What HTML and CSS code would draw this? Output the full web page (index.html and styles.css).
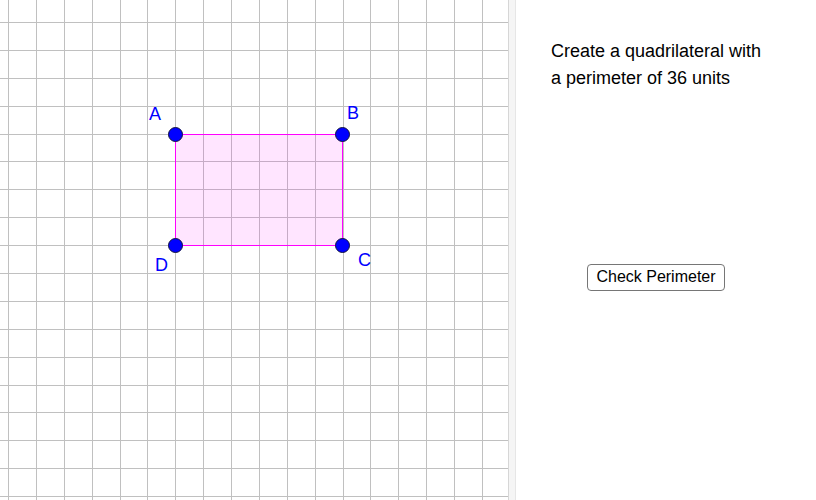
FILE: index.html
```html
<!DOCTYPE html>
<html lang="en">
<head>
    <meta charset="UTF-8">
    <title>Quadrilateral Perimeter</title>
    <link rel="stylesheet" href="styles.css">
</head>
<body>
    <div class="applet">
        <div class="graphics">
            <svg class="board" width="508" height="500" viewBox="0 0 508 500">
                <!-- grid, ~27.88px per unit -->
                <path class="grid" d="M8.5 0V500M36.5 0V500M64.5 0V500M92.5 0V500M120.5 0V500M147.5 0V500M175.5 0V500M203.5 0V500M231.5 0V500M259.5 0V500M287.5 0V500M315.5 0V500M343.5 0V500M370.5 0V500M398.5 0V500M426.5 0V500M454.5 0V500M482.5 0V500
                    M0 22.5H508M0 50.5H508M0 78.5H508M0 106.5H508M0 134.5H508M0 161.5H508M0 189.5H508M0 217.5H508M0 245.5H508M0 273.5H508M0 301.5H508M0 329.5H508M0 357.5H508M0 385.5H508M0 412.5H508M0 440.5H508M0 468.5H508M0 496.5H508"/>

                <polygon class="quad" points="175.5,134.5 342.5,134.5 342.5,245.5 175.5,245.5"/>

                <circle class="point" cx="175.5" cy="134.5" r="7"/>
                <circle class="point" cx="342.5" cy="134.5" r="7"/>
                <circle class="point" cx="342.5" cy="245.5" r="7"/>
                <circle class="point" cx="175.5" cy="245.5" r="7"/>

                <text class="label" x="149" y="120">A</text>
                <text class="label" x="347" y="119">B</text>
                <text class="label" x="358" y="266">C</text>
                <text class="label" x="155" y="271">D</text>
            </svg>
        </div>
        <div class="divider"></div>
        <div class="side">
            <p class="task">Create a quadrilateral with<br>a perimeter of 36 units</p>
            <button class="check-btn">Check Perimeter</button>
        </div>
    </div>
</body>
</html>
```

FILE: styles.css
```css
body {
    margin: 0;
    font-family: 'Liberation Sans', Arial, sans-serif;
    background: #ffffff;
    overflow: hidden;
}
.applet {
    display: flex;
    width: 816px;
    height: 500px;
}
.graphics {
    width: 508px;
    height: 500px;
    flex: none;
}
.board {
    display: block;
}
.grid {
    fill: none;
    stroke: #c0c0c0;
    stroke-width: 1;
}
.quad {
    fill: rgba(255, 0, 255, 0.1);
    stroke: #ff00ff;
    stroke-width: 1;
}
.point {
    fill: #0000ff;
    stroke: #14143c;
    stroke-width: 1;
}
.label {
    fill: #0000ff;
    font-family: 'Liberation Sans', Arial, sans-serif;
    font-size: 18px;
}
.divider {
    width: 8px;
    flex: none;
    box-sizing: border-box;
    background: #f5f5f5;
    border-left: 1px solid #d6d6d6;
    border-right: 1px solid #e6e6e6;
}
.side {
    flex: 1;
    display: flex;
    flex-direction: column;
    align-items: flex-start;
    padding: 38px 0 0 35px;
}
.task {
    margin: 0;
    font-size: 18px;
    line-height: 27px;
    color: #000;
}
.check-btn {
    margin: 172px 0 0 36px;
    width: 138px;
    height: 27px;
    padding: 0 0 1px;
    font-family: 'Liberation Sans', Arial, sans-serif;
    font-size: 16px;
    color: #000;
    background: #ffffff;
    border: 1px solid #767676;
    border-radius: 4px;
}
```
